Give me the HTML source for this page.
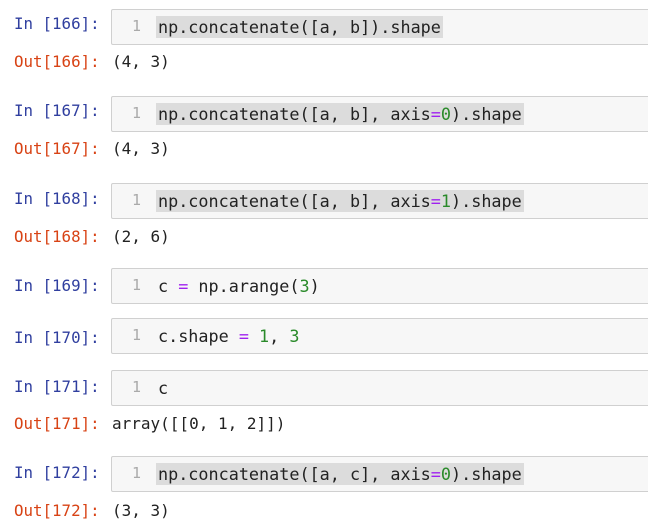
<!DOCTYPE html><html><head><style>
body{margin:0;width:648px;height:531px;background:#fff;position:relative;overflow:hidden;font-family:"DejaVu Sans Mono","Liberation Mono",monospace;font-size:16.8px}
.p{position:absolute;left:14px;color:#303f9f;line-height:20px;font-size:15.8px}
.o{color:#d84315}
.b{position:absolute;left:111px;right:-4px;height:34px;border:1px solid #d0d0d0;background:#f7f7f7;border-radius:2px}
.n{position:absolute;left:20px;top:7px;color:#aaa;font-size:15px}
.c{position:absolute;left:46px;top:6px;color:#222;line-height:22px;padding:0 2px;margin-left:-2px}
.h{background:#dcdcdc}
.t{position:absolute;left:112px;color:#222;line-height:20px;font-size:16px}
.g{color:#2a8a2a}.e{color:#a020f0}
</style></head><body>
<div class="p" style="top:14px">In [166]:</div>
<div class="b" style="top:9px"><span class="n">1</span><span class="c h">np.concatenate([a, b]).shape</span></div>
<div class="p o" style="top:52px">Out[166]:</div><div class="t" style="top:52px">(4, 3)</div>

<div class="p" style="top:101px">In [167]:</div>
<div class="b" style="top:96px"><span class="n">1</span><span class="c h">np.concatenate([a, b], axis<span class="e">=</span><span class="g">0</span>).shape</span></div>
<div class="p o" style="top:139px">Out[167]:</div><div class="t" style="top:139px">(4, 3)</div>

<div class="p" style="top:189px">In [168]:</div>
<div class="b" style="top:183px"><span class="n">1</span><span class="c h">np.concatenate([a, b], axis<span class="e">=</span><span class="g">1</span>).shape</span></div>
<div class="p o" style="top:227px">Out[168]:</div><div class="t" style="top:227px">(2, 6)</div>

<div class="p" style="top:276px">In [169]:</div>
<div class="b" style="top:268px"><span class="n">1</span><span class="c">c <span class="e">=</span> np.arange(<span class="g">3</span>)</span></div>

<div class="p" style="top:328px">In [170]:</div>
<div class="b" style="top:318px"><span class="n">1</span><span class="c">c.shape <span class="e">=</span> <span class="g">1</span>, <span class="g">3</span></span></div>

<div class="p" style="top:377px">In [171]:</div>
<div class="b" style="top:370px"><span class="n">1</span><span class="c">c</span></div>
<div class="p o" style="top:414px">Out[171]:</div><div class="t" style="top:414px">array([[0, 1, 2]])</div>

<div class="p" style="top:463px">In [172]:</div>
<div class="b" style="top:456px"><span class="n">1</span><span class="c h">np.concatenate([a, c], axis<span class="e">=</span><span class="g">0</span>).shape</span></div>
<div class="p o" style="top:501px">Out[172]:</div><div class="t" style="top:501px">(3, 3)</div>
</body></html>
